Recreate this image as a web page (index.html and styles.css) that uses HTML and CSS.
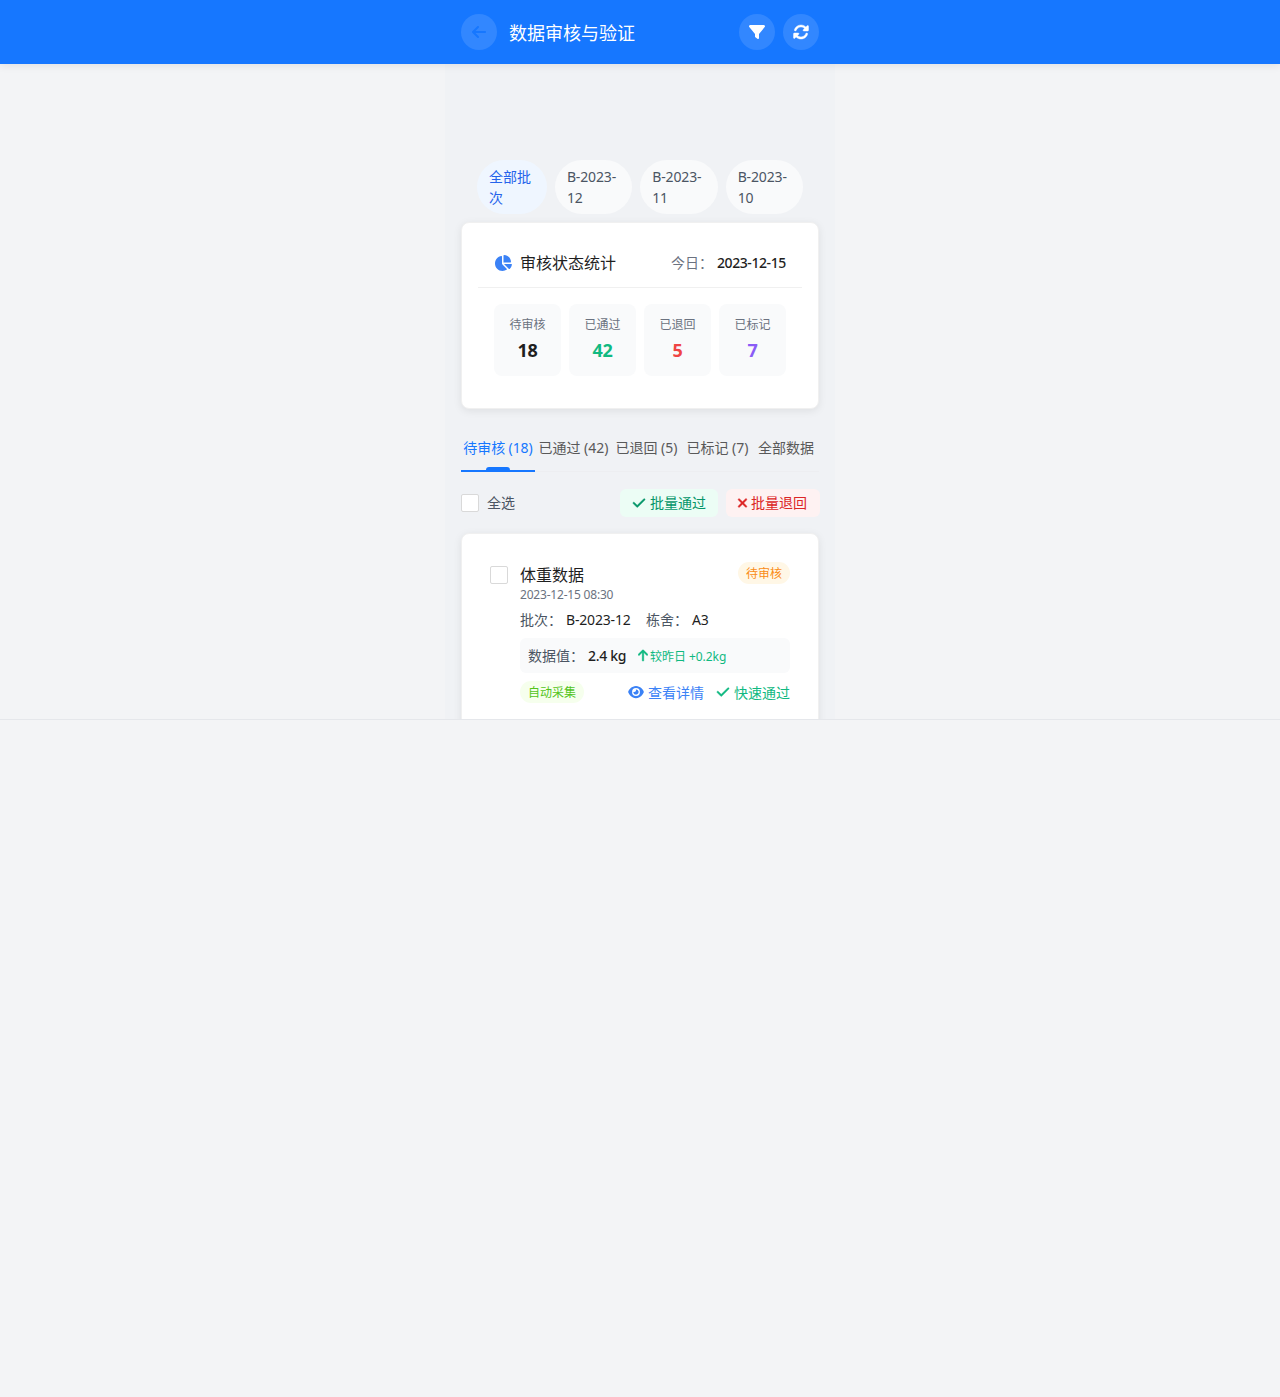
FILE: index.html
```html
<!DOCTYPE html>
<html lang="zh-CN">
<head>
<meta charset="utf-8">
<title>数据审核与验证</title>
<link rel="stylesheet" href="styles.css">
</head>
<body>
<svg class="sprite" aria-hidden="true">
  <symbol id="check" viewBox="0 0 448 512"><path d="M438.6 105.4c12.5 12.5 12.5 32.8 0 45.3l-256 256c-12.5 12.5-32.8 12.5-45.3 0l-128-128c-12.5-12.5-12.5-32.8 0-45.3s32.8-12.5 45.3 0L160 338.7 393.4 105.4c12.5-12.5 32.8-12.5 45.3 0z"/></symbol>
</svg>
<header class="topbar">
  <div class="topbar-inner">
    <button class="round back"><svg width="14" height="16" viewBox="0 0 448 512"><path d="M9.4 233.4c-12.5 12.5-12.5 32.8 0 45.3l160 160c12.5 12.5 32.8 12.5 45.3 0s12.5-32.8 0-45.3L109.2 288 416 288c17.7 0 32-14.3 32-32s-14.3-32-32-32l-306.7 0L214.6 118.6c12.5-12.5 12.5-32.8 0-45.3s-32.8-12.5-45.3 0l-160 160z"/></svg></button>
    <h1 class="title">数据审核与验证</h1>
    <button class="round"><svg width="16" height="16" viewBox="0 0 512 512"><path d="M3.9 54.9C10.5 40.9 24.5 32 40 32l432 0c15.5 0 29.5 8.9 36.1 22.9s4.6 30.5-5.2 42.5L320 320.9 320 448c0 12.1-6.8 23.2-17.7 28.6s-23.8 4.3-33.5-3l-64-48c-8.1-6-12.8-15.5-12.8-25.6l0-79.1L9 97.3C-.7 85.4-2.8 68.8 3.9 54.9z"/></svg></button>
    <button class="round"><svg class="bold" width="16" height="16" viewBox="0 0 512 512"><path d="M142.9 142.9c-17.5 17.5-30.1 38-37.8 59.8c-5.9 16.7-24.2 25.4-40.8 19.5s-25.4-24.2-19.5-40.8C55.6 150.7 73.2 122 97.6 97.6c87.2-87.2 228.3-87.5 315.8-1L455 55c6.9-6.9 17.2-8.9 26.2-5.2s14.8 12.5 14.8 22.2l0 128c0 13.3-10.7 24-24 24l-8.4 0c0 0 0 0 0 0L344 224c-9.7 0-18.5-5.8-22.2-14.8s-1.7-19.3 5.2-26.2l41.1-41.1c-62.6-61.5-163.1-61.2-225.3 1zM16 312c0-13.3 10.7-24 24-24l7.6 0 .7 0L168 288c9.7 0 18.5 5.8 22.2 14.8s1.7 19.3-5.2 26.2l-41.1 41.1c62.6 61.5 163.1 61.2 225.3-1c17.5-17.5 30.1-38 37.8-59.8c5.9-16.7 24.2-25.4 40.8-19.5s25.4 24.2 19.5 40.8c-10.8 30.6-28.4 59.3-52.9 83.8c-87.2 87.2-228.3 87.5-315.8 1L57 457c-6.9 6.9-17.2 8.9-26.2 5.2S16 449.7 16 440l0-119.6 0-.7 0-7.6z"/></svg></button>
  </div>
</header>
<div class="viewport">
<main class="screen">
  <div class="chips">
    <span class="chip chip-all">全部批次</span>
    <span class="chip">B-2023-12</span>
    <span class="chip">B-2023-11</span>
    <span class="chip">B-2023-10</span>
  </div>
  <section class="card stats-card">
    <div class="stats-head">
      <svg class="pie" width="18" height="16" viewBox="0 0 576 512"><path d="M304 240l0-223.4c0-9 7-16.6 16-16.6C443.7 0 544 100.3 544 224c0 9-7.6 16-16.6 16L304 240zM32 272C32 150.7 122.1 50.3 239 34.3c9.2-1.3 17 6.1 17 15.4L256 288 412.5 444.5c6.7 6.7 6.2 17.7-1.5 23.1C371.8 495.6 323.8 512 272 512C139.5 512 32 404.6 32 272zm526.4 16c9.3 0 16.6 7.8 15.4 17c-7.7 55.9-34.6 105.6-73.9 142.3c-6 5.6-15.4 5.2-21.2-.7L320 288l238.4 0z"/></svg>
      <h2 class="heading">审核状态统计</h2>
      <span class="today">今日：</span><span class="today-date">2023-12-15</span>
    </div>
    <div class="stats">
      <div class="stat"><span class="stat-label">待审核</span><b class="stat-num">18</b></div>
      <div class="stat"><span class="stat-label">已通过</span><b class="stat-num green">42</b></div>
      <div class="stat"><span class="stat-label">已退回</span><b class="stat-num red">5</b></div>
      <div class="stat"><span class="stat-label">已标记</span><b class="stat-num purple">7</b></div>
    </div>
  </section>
  <nav class="tabs">
    <a class="tab active">待审核 (18)</a>
    <a class="tab">已通过 (42)</a>
    <a class="tab">已退回 (5)</a>
    <a class="tab">已标记 (7)</a>
    <a class="tab">全部数据</a>
  </nav>
  <div class="bulk">
    <span class="box"></span><span class="select-all">全选</span>
    <button class="action approve"><svg class="bold" width="14" height="14"><use href="#check"/></svg>批量通过</button>
    <button class="action reject"><svg class="bold" width="11" height="14" viewBox="0 0 384 512"><path d="M342.6 150.6c12.5-12.5 12.5-32.8 0-45.3s-32.8-12.5-45.3 0L192 210.7 86.6 105.4c-12.5-12.5-32.8-12.5-45.3 0s-12.5 32.8 0 45.3L146.7 256 41.4 361.4c-12.5 12.5-12.5 32.8 0 45.3s32.8 12.5 45.3 0L192 301.3 297.4 406.6c12.5 12.5 32.8 12.5 45.3 0s12.5-32.8 0-45.3L237.3 256 342.6 150.6z"/></svg>批量退回</button>
  </div>
  <article class="card record">
    <span class="box"></span>
    <div class="record-body">
      <div class="record-head">
        <div>
          <h2 class="heading">体重数据</h2>
          <div class="time">2023-12-15 08:30</div>
        </div>
        <span class="tag pending">待审核</span>
      </div>
      <div class="meta">
        <span class="meta-key">批次：</span><span class="batch">B-2023-12</span>
        <span class="meta-key house">栋舍：</span><span class="pen">A3</span>
      </div>
      <div class="value">
        <span class="meta-key">数据值：</span><span class="weight">2.4 kg</span>
        <svg class="bold" width="10" height="13" viewBox="0 0 384 512"><path d="M214.6 41.4c-12.5-12.5-32.8-12.5-45.3 0l-160 160c-12.5 12.5-12.5 32.8 0 45.3s32.8 12.5 45.3 0L160 141.2 160 448c0 17.7 14.3 32 32 32s32-14.3 32-32l0-306.7L329.4 246.6c12.5 12.5 32.8 12.5 45.3 0s12.5-32.8 0-45.3l-160-160z"/></svg>
        <span class="trend">较昨日 +0.2kg</span>
      </div>
      <div class="record-foot">
        <span class="tag auto">自动采集</span>
        <a class="link detail"><svg width="16" height="14" viewBox="0 0 576 512"><path d="M288 32c-80.8 0-145.5 36.8-192.6 80.6C48.6 156 17.3 208 2.5 243.7c-3.3 7.9-3.3 16.7 0 24.6C17.3 304 48.6 356 95.4 399.4C142.5 443.2 207.2 480 288 480s145.5-36.8 192.6-80.6c46.8-43.5 78.1-95.4 93-131.1c3.3-7.9 3.3-16.7 0-24.6c-14.9-35.7-46.2-87.7-93-131.1C433.5 68.8 368.8 32 288 32zM144 256a144 144 0 1 1 288 0 144 144 0 1 1 -288 0zm144-64c0 35.3-28.7 64-64 64c-7.1 0-13.9-1.2-20.3-3.3c-5.5-1.8-11.9 1.6-11.7 7.4c.3 6.9 1.3 13.8 3.2 20.7c13.7 51.2 66.4 81.6 117.6 67.9s81.6-66.4 67.9-117.6c-11.1-41.5-47.8-69.4-88.6-71.1c-5.8-.2-9.2 6.1-7.4 11.7c2.1 6.4 3.3 13.2 3.3 20.3z"/></svg>查看详情</a>
        <a class="link pass"><svg class="bold" width="14" height="14"><use href="#check"/></svg>快速通过</a>
      </div>
    </div>
  </article>
</main>
</div>
</body>
</html>
```
FILE: styles.css
```css
* { box-sizing: border-box; }
body {
  margin: 0;
  min-height: 1397px;
  background: #f3f4f6;
  color: #1f1f1f;
  font: 14px/21px "Noto Sans", "Noto Sans CJK SC", sans-serif;
}
svg { display: block; flex: none; fill: currentColor; }
.bold { stroke: currentColor; stroke-width: 14px; }
.sprite { width: 0; height: 0; position: absolute; }
button { border: 0; padding: 0; font: inherit; color: inherit; }
h1, h2 { margin: 0; font-weight: 400; }

.topbar {
  position: relative;
  z-index: 1;
  height: 64px;
  background: #1677ff;
  color: #fff;
  box-shadow: 0 2px 8px rgba(0, 0, 0, .08);
}
.topbar-inner { display: flex; align-items: center; width: 358px; height: 64px; margin: 0 auto; }
.round {
  display: flex;
  align-items: center;
  justify-content: center;
  width: 36px;
  height: 36px;
  margin-left: 8px;
  border-radius: 50%;
  background: rgba(255, 255, 255, .12);
}
.round.back { margin-left: 0; color: #1677ff; }
.title { flex: 1; margin-left: 12px; padding-top: 1px; font-size: 18px; line-height: 28px; }

.viewport { height: 656px; overflow: hidden; border-bottom: 1px solid #e5e7eb; }
.screen { width: 390px; height: 655px; margin: 0 auto; padding: 96px 16px 0; background: #f0f2f5; overflow: hidden; }

.chips { display: flex; gap: 8px; padding: 0 16px; }
.chip {
  width: 77.5px;
  height: 54px;
  padding: 6px 12px;
  border-radius: 27px;
  background: #f9fafb;
  color: #4b5563;
  letter-spacing: -.15px;
}
.chip-all { width: 70px; background: #eff6ff; color: #2563eb; letter-spacing: 0; }

.card {
  background: #fff;
  border: 1px solid #f0f0f0;
  border-radius: 8px;
  box-shadow: 0 2px 8px rgba(0, 0, 0, .08);
}
.stats-card { height: 187px; margin-top: 8px; padding: 16px; }
.stats-head {
  display: flex;
  align-items: center;
  height: 49px;
  padding: 0 16px;
  border-bottom: 1px solid #f0f0f0;
}
.pie { color: #3b82f6; }
.heading { font-size: 16px; line-height: 24px; }
.stats-head .heading { margin: 0 auto 0 8px; }
.today { color: #6b7280; }
.today, .today-date { padding-bottom: 1px; }
.today-date { width: 69px; margin-left: 4px; font-weight: 500; letter-spacing: -.42px; white-space: nowrap; }
.stats { display: grid; grid-template-columns: repeat(4, 1fr); gap: 8px; padding: 16px 16px 0; }
.stat {
  display: flex;
  flex-direction: column;
  align-items: center;
  height: 72px;
  padding-top: 12px;
  border-radius: 8px;
  background: #f9fafb;
}
.stat-label { color: #6b7280; font-size: 12px; line-height: 18px; }
.stat-num { font-size: 18px; line-height: 28px; margin-top: 2px; letter-spacing: -.3px; }
.green { color: #10b981; }
.red { color: #ef4444; }
.purple { color: #8b5cf6; }

.tabs {
  display: grid;
  grid-template-columns: 74px 77px 69px 73px 65px;
  height: 48px;
  margin-top: 15px;
  border-bottom: 1px solid #edeef1;
}
.tab { height: 48px; padding-top: 13px; text-align: center; color: #595959; white-space: nowrap; }
.tab.active { position: relative; color: #1677ff; border-bottom: 2px solid #1677ff; letter-spacing: -.1px; }
.tab:last-child { padding-right: 1px; }
.tab.active::after {
  content: "";
  position: absolute;
  left: 25px;
  bottom: 0;
  width: 24px;
  height: 3px;
  border-radius: 3px 3px 0 0;
  background: #1677ff;
}

.bulk { display: flex; align-items: center; height: 28px; margin-top: 17px; }
.box { flex: none; width: 18px; height: 18px; border: 1px solid #d9d9d9; border-radius: 2px; background: #fff; }
.select-all { margin: 0 auto 0 8px; padding-bottom: 1px; color: #4b5563; }
.action { display: flex; align-items: center; height: 28px; padding-bottom: 1px; border-radius: 6px; }
.approve { width: 98px; padding-left: 12px; gap: 4px; background: #ecfdf5; color: #059669; }
.reject { width: 94px; margin-left: 8px; margin-right: -1px; padding-left: 11px; gap: 3px; background: #fef2f2; color: #dc2626; }

.record { display: flex; gap: 12px; height: 210px; margin-top: 16px; padding: 28px; }
.record > .box { margin-top: 4px; }
.record-body { flex: 1; }
.record-head { display: flex; justify-content: space-between; align-items: flex-start; height: 42px; }
.record .heading { padding-top: 1px; }
.time { color: #6b7280; font-size: 12px; line-height: 16px; letter-spacing: -.2px; }
.tag { height: 22px; padding: 0 8px; border-radius: 11px; font-size: 12px; line-height: 24px; }
.pending { background: #fff7e6; color: #fa8c16; }
.meta { display: flex; align-items: center; height: 21px; margin-top: 5px; }
.meta-key { color: #4b5563; }
.batch { width: 65px; margin-left: 4px; letter-spacing: -.18px; }
.house { margin-left: 15px; }
.pen { margin-left: 4px; letter-spacing: -.2px; }
.value { display: flex; align-items: center; height: 35px; margin-top: 8px; padding: 0 8px; border-radius: 6px; background: #f9fafb; color: #10b981; }
.weight { width: 39px; margin: 0 11px 0 4px; color: #1f1f1f; font-weight: 500; letter-spacing: -.3px; white-space: nowrap; }
.trend { margin-left: 2px; padding-top: 1px; font-size: 12px; letter-spacing: -.05px; }
.record-foot { display: flex; align-items: center; height: 22px; margin-top: 8px; }
.auto { margin-right: auto; background: #f6ffed; color: #52c41a; }
.link { display: flex; align-items: center; gap: 4px; }
.detail { color: #3b82f6; }
.pass { margin-left: 12px; color: #10b981; }
```
